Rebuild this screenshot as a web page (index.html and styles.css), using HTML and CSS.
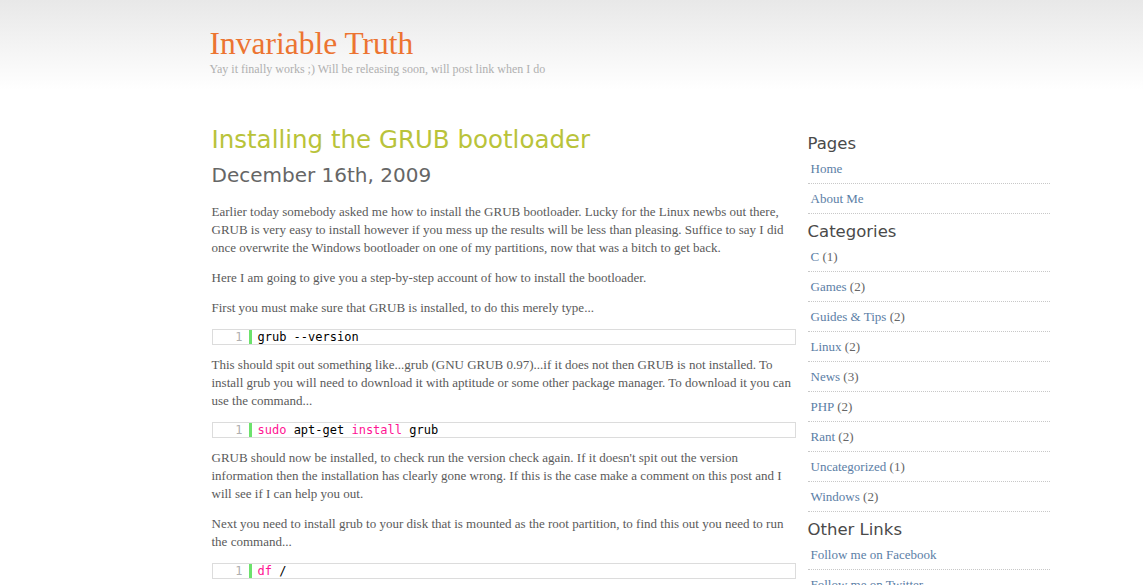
FILE: index.html
```html
<!DOCTYPE html>
<html>
<head>
<meta charset="utf-8">
<title>Invariable Truth</title>
<link rel="stylesheet" href="styles.css">
</head>
<body>
<header class="masthead">
  <div class="wrap">
    <div class="brand">
      <h1 class="site-title">Invariable Truth</h1>
      <p class="tagline">Yay it finally works ;) Will be releasing soon, will post link when I do</p>
    </div>
  </div>
</header>
<div class="wrap layout">
  <main class="post">
    <h2 class="post-title">Installing the GRUB bootloader</h2>
    <div class="post-date">December 16th, 2009</div>
    <p>Earlier today somebody asked me how to install the GRUB bootloader. Lucky for the Linux newbs out there, GRUB is very easy to install however if you mess up the results will be less than pleasing. Suffice to say I did once overwrite the Windows bootloader on one of my partitions, now that was a bitch to get back.</p>
    <p>Here I am going to give you a step-by-step account of how to install the bootloader.</p>
    <p>First you must make sure that GRUB is installed, to do this merely type...</p>
    <div class="code"><span class="ln">1</span><span class="src">grub --version</span></div>
    <p>This should spit out something like...grub (GNU GRUB 0.97)...if it does not then GRUB is not installed. To install grub you will need to download it with aptitude or some other package manager. To download it you can use the command...</p>
    <div class="code"><span class="ln">1</span><span class="src"><span class="kw">sudo</span> apt-get <span class="kw">install</span> grub</span></div>
    <p>GRUB should now be installed, to check run the version check again. If it doesn't spit out the version information then the installation has clearly gone wrong. If this is the case make a comment on this post and I will see if I can help you out.</p>
    <p>Next you need to install grub to your disk that is mounted as the root partition, to find this out you need to run the command...</p>
    <div class="code"><span class="ln">1</span><span class="src"><span class="kw">df</span> /</span></div>
  </main>
  <aside class="sidebar">
    <h3 class="widget-title">Pages</h3>
    <ul class="links">
      <li><a href="#">Home</a></li>
      <li><a href="#">About Me</a></li>
    </ul>
    <h3 class="widget-title">Categories</h3>
    <ul class="links">
      <li><a href="#">C</a> (1)</li>
      <li><a href="#">Games</a> (2)</li>
      <li><a href="#">Guides &amp; Tips</a> (2)</li>
      <li><a href="#">Linux</a> (2)</li>
      <li><a href="#">News</a> (3)</li>
      <li><a href="#">PHP</a> (2)</li>
      <li><a href="#">Rant</a> (2)</li>
      <li><a href="#">Uncategorized</a> (1)</li>
      <li><a href="#">Windows</a> (2)</li>
    </ul>
    <h3 class="widget-title">Other Links</h3>
    <ul class="links">
      <li><a href="#">Follow me on Facebook</a></li>
      <li><a href="#">Follow me on Twitter</a></li>
    </ul>
  </aside>
</div>
</body>
</html>
```
FILE: styles.css
```css
html, body {
  margin: 0;
  padding: 0;
  background: #fff;
}
body {
  font-family: "Liberation Serif", Georgia, serif;
  color: #5a5a5a;
  overflow: hidden;
}
.wrap {
  width: 960px;
  margin: 0 auto;
}
.masthead {
  height: 90px;
  background: linear-gradient(#e8e8e8, #ffffff);
}
.brand {
  padding: 25px 0 0 118px;
}
.site-title {
  margin: 0;
  font-family: "Liberation Serif", Georgia, serif;
  font-weight: normal;
  font-size: 31.5px;
  line-height: 37px;
  color: #ec7431;
}
.tagline {
  margin: 0;
  font-size: 12px;
  line-height: 14px;
  color: #b0b0b0;
}
.layout {
  display: flex;
  gap: 12px;
  padding-top: 34px;
}
.post {
  width: 584px;
  margin-left: 120px;
}
.post-title {
  margin: 0;
  font-family: "DejaVu Sans", Verdana, sans-serif;
  font-weight: normal;
  font-size: 24.5px;
  line-height: 32px;
  color: #b9c33a;
}
.post-date {
  font-family: "DejaVu Sans", Verdana, sans-serif;
  font-size: 20px;
  line-height: 30px;
  color: #666;
  margin-top: 4px;
  margin-bottom: 13px;
}
.post p {
  font-size: 13px;
  line-height: 18px;
  margin: 0 0 12px;
}
.code {
  display: flex;
  border: 1px solid #dcdcdc;
  height: 14px;
  margin: 0 0 11px;
  font-family: "DejaVu Sans Mono", monospace;
  font-size: 12px;
  line-height: 14px;
  color: #000;
}
.ln {
  width: 30px;
  padding-right: 6px;
  text-align: right;
  color: #afafaf;
  border-right: 3px solid #6ce26c;
}
.src {
  padding-left: 6px;
}
.kw {
  color: #ff1493;
}
.sidebar {
  width: 242px;
  padding-top: 9px;
}
.widget-title {
  margin: 0;
  font-family: "DejaVu Sans", Verdana, sans-serif;
  font-weight: normal;
  font-size: 16.5px;
  line-height: 21px;
  color: #4a4a4a;
}
.widget-title ~ .widget-title {
  margin-top: 7px;
}
.links {
  list-style: none;
  margin: 0;
  padding: 0;
  font-size: 13px;
  color: #666;
}
.links li {
  padding: 6px 0 5px 3px;
  line-height: 18px;
  border-bottom: 1px dotted #c8c8c8;
}
.links a {
  color: #5b7ea6;
  text-decoration: none;
}
```
